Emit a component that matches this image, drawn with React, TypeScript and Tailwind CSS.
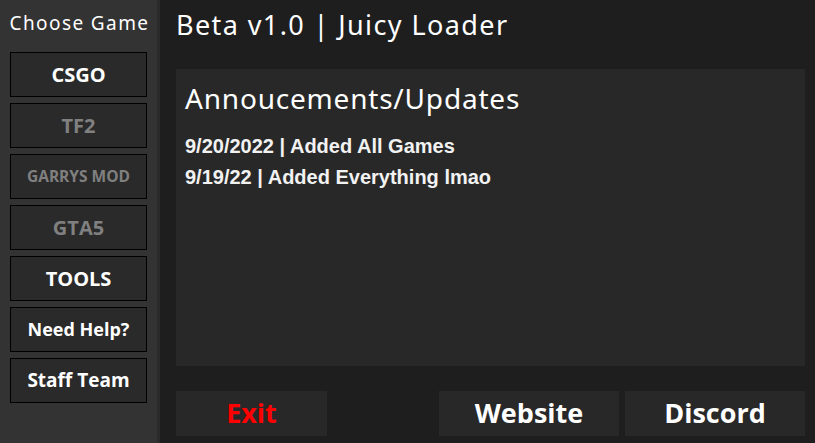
import React from 'react';

const heading = { fontFamily: '"Noto Sans", "Open Sans", sans-serif' };
const ui = { fontFamily: '"Open Sans", "Noto Sans", sans-serif' };

const SideButton: React.FC<{ label: string; dim?: boolean; size: string }> = ({ label, dim, size }) => (
  <button
    style={ui}
    className={`h-[45px] w-full border border-black bg-[#2a2a2a] font-bold ${size} ${dim ? 'text-[#808080]' : 'text-white'}`}
  >
    {label}
  </button>
);

const App: React.FC = () => {
  return (
    <div className="flex h-[443px] w-[815px] overflow-hidden bg-[#1e1e1e]">
      <aside className="flex w-[160px] shrink-0 flex-col border-r-[3px] border-[#2b2b2b] bg-[#333333]">
        <div style={heading} className="whitespace-nowrap pt-[10px] pb-[16px] pl-[2px] text-center text-[19px] leading-[26px] tracking-[1.4px] text-white">
          Choose Game
        </div>
        <div className="flex flex-col gap-[6px] px-[10px]">
          <SideButton label="CSGO" size="text-[20px]" />
          <SideButton label="TF2" dim size="text-[20px]" />
          <SideButton label="GARRYS MOD" dim size="text-[15.5px]" />
          <SideButton label="GTA5" dim size="text-[20px]" />
          <SideButton label="TOOLS" size="text-[20px]" />
          <SideButton label="Need Help?" size="text-[18px]" />
          <SideButton label="Staff Team" size="text-[19px]" />
        </div>
      </aside>
      <main className="flex flex-1 flex-col pl-4 pr-[10px]">
        <h1 style={heading} className="pt-[9px] text-[27px] leading-[32px] tracking-[1.4px] text-white">
          Beta v1.0 | Juicy Loader
        </h1>
        <section className="mt-[28px] h-[297px] bg-[#282828] px-[9px] pt-[10px]">
          <h2 style={heading} className="text-[28px] leading-[38px] tracking-[0.8px] text-white">
            Annoucements/Updates
          </h2>
          <div
            style={{ fontFamily: '"Liberation Sans", Arial, sans-serif' }}
            className="mt-[18px] flex flex-col gap-[9px] text-[20px] font-bold leading-[22px] text-[#f2f2f2]"
          >
            <p>9/20/2022 | Added All Games</p>
            <p>9/19/22 | Added Everything lmao</p>
          </div>
        </section>
        <div style={ui} className="mt-[25px] flex h-[45px] text-[27px] font-bold">
          <button className="w-[151px] bg-[#282828] text-[#ff0000]">Exit</button>
          <button className="ml-auto w-[180px] bg-[#282828] text-white">Website</button>
          <button className="ml-[6px] w-[180px] bg-[#282828] text-white">Discord</button>
        </div>
      </main>
    </div>
  );
};

export default App;
